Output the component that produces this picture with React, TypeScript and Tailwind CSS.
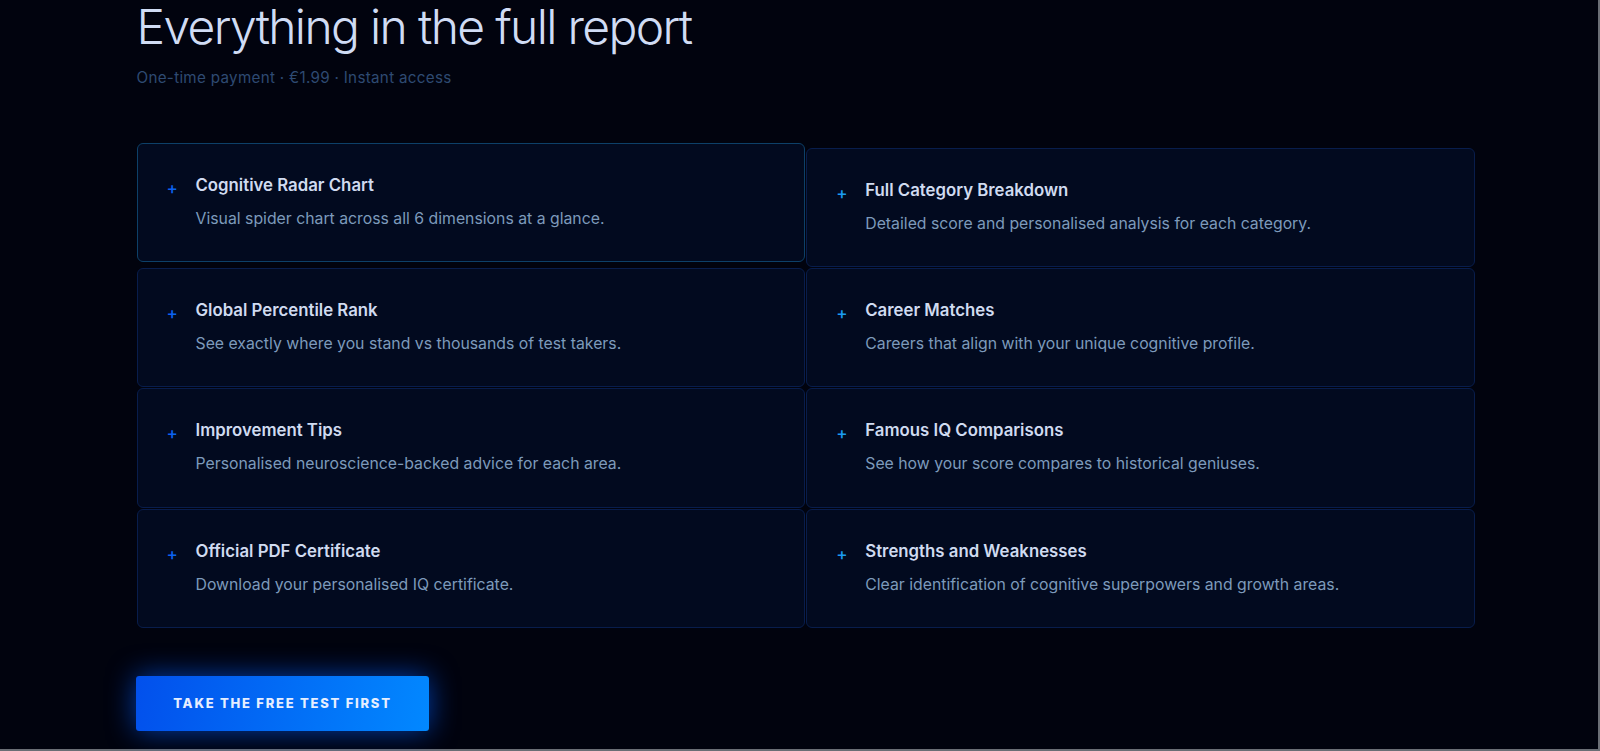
const items = [
  ["Cognitive Radar Chart", "Visual spider chart across all 6 dimensions at a glance."],
  ["Full Category Breakdown", "Detailed score and personalised analysis for each category."],
  ["Global Percentile Rank", "See exactly where you stand vs thousands of test takers."],
  ["Career Matches", "Careers that align with your unique cognitive profile."],
  ["Improvement Tips", "Personalised neuroscience-backed advice for each area."],
  ["Famous IQ Comparisons", "See how your score compares to historical geniuses."],
  ["Official PDF Certificate", "Download your personalised IQ certificate."],
  ["Strengths and Weaknesses", "Clear identification of cognitive superpowers and growth areas."],
];

export default function App() {
  return (
    <div className="h-[751px] w-[1600px] overflow-hidden bg-[#6a6e75] font-['Inter',sans-serif]">
      <div className="h-[749px] w-[1598px] bg-[#01030e] pl-[136.5px]">
        <h1 className="text-[48px] leading-[54px] font-light tracking-[-1.67px] text-[#d0dcf4]">Everything in the full report</h1>
        <p className="mt-[13px] text-[15.2px] leading-[22px] tracking-[0.3px] text-[#2e4a72]">One-time payment · €1.99 · Instant access</p>
        <div className="mt-[59px] grid w-[1338.5px] grid-cols-2 gap-[1px]">
          {items.map(([title, desc], i) => (
            <div
              key={title}
              className={
                "flex h-[119.2px] items-start gap-[19px] rounded-[6px] border bg-[#020a1f] pt-[30px] pl-[29px] " +
                (i === 0 ? "-translate-y-[5px] border-[#0d4068]" : "border-[#081d4c]")
              }
            >
              <span
                className={
                  "mt-[6px] w-[10px] text-center text-[17px] leading-[16px] font-medium " +
                  (i % 2 === 0 ? "text-[#0b62f0]" : "text-[#1a9bf2]")
                }
              >
                +
              </span>
              <div>
                <h3 className="text-[16.8px] leading-[22px] font-semibold text-[#d0dbf0]">{title}</h3>
                <p className="mt-[12px] text-[15.8px] leading-[22px] text-[#7d9abb]">{desc}</p>
              </div>
            </div>
          ))}
        </div>
        <button className="mt-[48px] -ml-[0.5px] h-[55.5px] w-[293px] rounded-[3px] bg-[linear-gradient(100deg,#0250ec,#0288ff)] text-[13px] font-extrabold tracking-[1.75px] text-[#e6eeff] shadow-[0_0_28px_rgba(0,90,255,0.65)]">
          TAKE THE FREE TEST FIRST
        </button>
      </div>
    </div>
  );
}
